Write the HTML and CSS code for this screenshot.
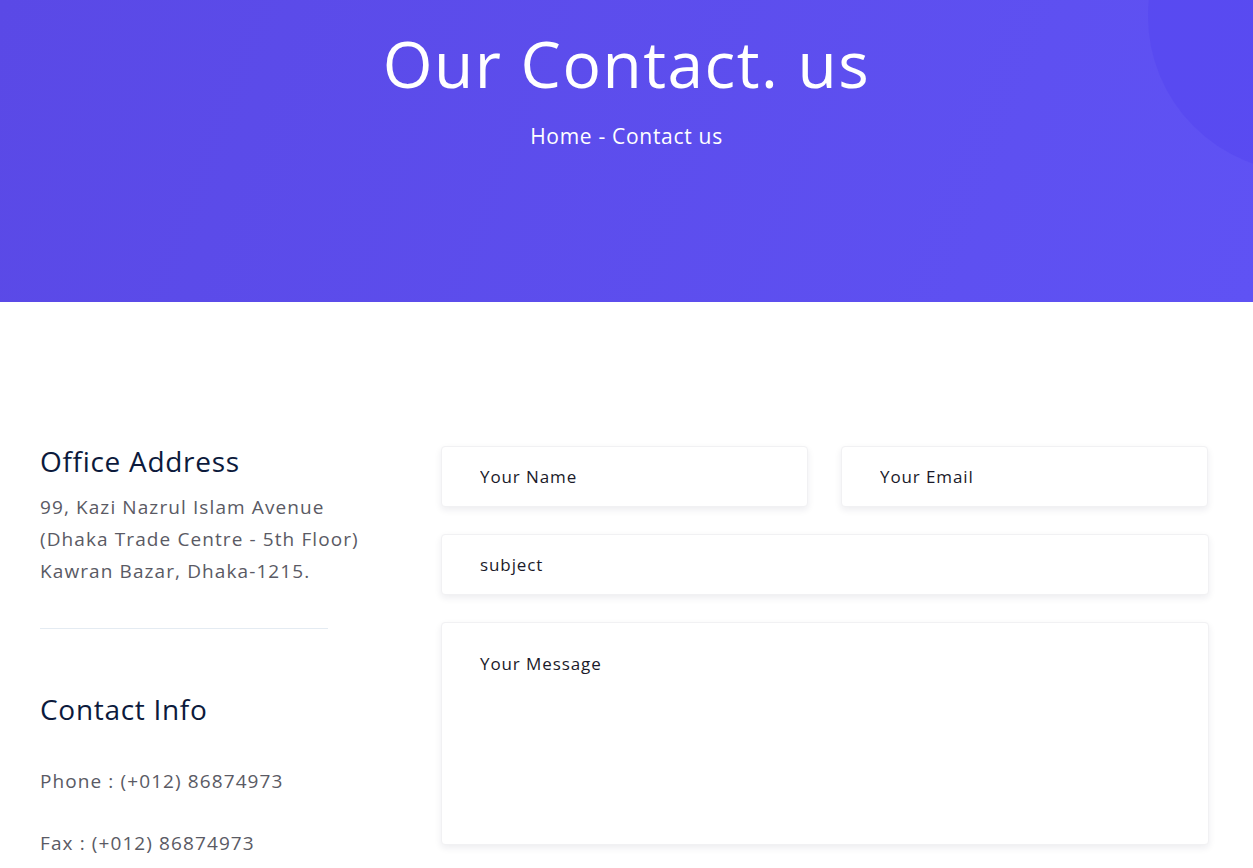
FILE: index.html
```html
<!DOCTYPE html>
<html lang="en">
<head>
<meta charset="utf-8">
<title>Contact us</title>
<link rel="stylesheet" href="styles.css">
</head>
<body>
<header class="hero">
  <div class="hero-circle"></div>
  <h1 class="hero-title">Our Contact. us</h1>
  <p class="breadcrumb">Home - Contact us</p>
</header>
<main class="contact">
  <aside class="info">
    <h2 class="info-title">Office Address</h2>
    <p class="info-text">99, Kazi Nazrul Islam Avenue<br>(Dhaka Trade Centre - 5th Floor)<br>Kawran Bazar, Dhaka-1215.</p>
    <hr class="divider">
    <h2 class="info-title info-title-2">Contact Info</h2>
    <p class="info-line">Phone : (+012) 86874973</p>
    <p class="info-line">Fax : (+012) 86874973</p>
  </aside>
  <form class="form">
    <div class="form-row">
      <input class="field" type="text" placeholder="Your Name">
      <input class="field" type="email" placeholder="Your Email">
    </div>
    <input class="field" type="text" placeholder="subject">
    <textarea class="field field-msg" placeholder="Your Message"></textarea>
  </form>
</main>
</body>
</html>
```
FILE: styles.css
```css
* { box-sizing: border-box; }
html, body { margin: 0; padding: 0; }
body {
  font-family: "Open Sans", "Liberation Sans", sans-serif;
  background: #fff;
  overflow: hidden;
}
.hero {
  position: relative;
  height: 302px;
  overflow: hidden;
  background: linear-gradient(110deg, #5a49e6 0%, #5f52f4 100%);
  color: #fff;
  text-align: center;
  padding-top: 21px;
}
.hero-circle {
  position: absolute;
  left: 1148px;
  top: -140px;
  width: 312px;
  height: 312px;
  border-radius: 50%;
  background: rgba(82, 66, 240, 0.45);
}
.hero-title {
  position: relative;
  margin: 0;
  font-weight: 400;
  font-size: 64px;
  line-height: 86px;
  letter-spacing: 1.5px;
}
.breadcrumb {
  position: relative;
  margin: 15px 0 0;
  font-size: 21px;
  line-height: 28px;
  letter-spacing: 0.7px;
}
.contact {
  display: grid;
  grid-template-columns: 401px 768px;
  padding: 141px 0 0 40px;
}
.info-title {
  margin: 0;
  font-weight: 400;
  font-size: 28px;
  line-height: 36px;
  letter-spacing: 0.7px;
  color: #0c1a3c;
}
.info-text {
  margin: 12px 0 0;
  font-size: 19px;
  line-height: 32px;
  letter-spacing: 1.1px;
  color: #5a5a64;
}
.divider {
  width: 288px;
  margin: 41px 0 0;
  border: 0;
  border-top: 1px solid #e4ebf2;
}
.info-title-2 { margin-top: 62px; }
.info-line {
  margin: 37px 0 0;
  font-size: 19px;
  line-height: 34px;
  letter-spacing: 1.1px;
  color: #5a5a64;
}
.info-line + .info-line { margin-top: 28px; }
.form {
  display: flex;
  flex-direction: column;
  gap: 27px;
  padding-top: 3px;
}
.form-row {
  display: flex;
  gap: 33px;
}
.field {
  display: block;
  width: 100%;
  height: 61px;
  border: 1px solid #f1f1f3;
  border-radius: 4px;
  background: #fff;
  box-shadow: 0 3px 7px rgba(20, 20, 60, 0.08);
  padding: 0 38px;
  font-family: inherit;
  font-size: 17px;
  letter-spacing: 0.9px;
  color: #1a1a2a;
  outline: none;
}
.field::placeholder { color: #1a1a2a; opacity: 1; }
.form-row .field { width: 367px; }
.field-msg {
  height: 223px;
  padding-top: 29px;
  resize: none;
  line-height: 24px;
}
```
